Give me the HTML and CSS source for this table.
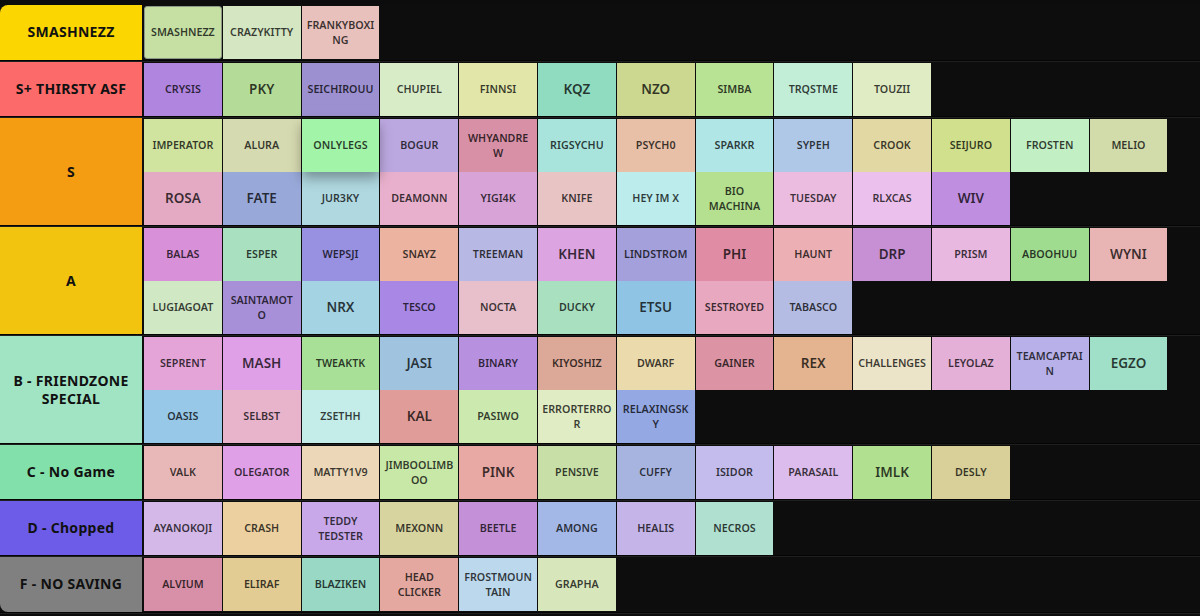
FILE: index.html
```html
<!DOCTYPE html>
<html lang="en">
<head>
<meta charset="utf-8">
<title>Tier List</title>
<link rel="stylesheet" href="styles.css">
</head>
<body>
<div class="board">
  <div class="tier">
    <div class="label first" style="background:#fcd600">SMASHNEZZ</div>
    <div class="tiles">
      <div class="tile selected" style="background:#c6e0a4">SMASHNEZZ</div>
      <div class="tile" style="background:#d4e6c2">CRAZYKITTY</div>
      <div class="tile" style="background:#e8c0bc">FRANKYBOXI<br>NG</div>
    </div>
  </div>
  <div class="tier">
    <div class="label" style="background:#fd6a6a">S+ THIRSTY ASF</div>
    <div class="tiles">
      <div class="tile" style="background:#b085e0">CRYSIS</div>
      <div class="tile big" style="background:#b4dc98">PKY</div>
      <div class="tile" style="background:#9c90d0">SEICHIROUU</div>
      <div class="tile" style="background:#d8ecc8">CHUPIEL</div>
      <div class="tile" style="background:#e2e6a8">FINNSI</div>
      <div class="tile big" style="background:#90dcc0">KQZ</div>
      <div class="tile big" style="background:#ccd890">NZO</div>
      <div class="tile" style="background:#b8e294">SIMBA</div>
      <div class="tile" style="background:#c2eed8">TRQSTME</div>
      <div class="tile" style="background:#e0ecc4">TOUZII</div>
    </div>
  </div>
  <div class="tier">
    <div class="label" style="background:#f49c12">S</div>
    <div class="tiles">
      <div class="tile" style="background:#d0e4a0">IMPERATOR</div>
      <div class="tile" style="background:#d6dab0">ALURA</div>
      <div class="tile lifted" style="background:#a2f4a8">ONLYLEGS</div>
      <div class="tile" style="background:#bca8e0">BOGUR</div>
      <div class="tile" style="background:#d890a6">WHYANDRE<br>W</div>
      <div class="tile" style="background:#a8e4dc">RIGSYCHU</div>
      <div class="tile" style="background:#e8c0a8">PSYCH0</div>
      <div class="tile" style="background:#b0e6e6">SPARKR</div>
      <div class="tile" style="background:#b0c8e8">SYPEH</div>
      <div class="tile" style="background:#e2d8a4">CROOK</div>
      <div class="tile" style="background:#d0e08c">SEIJURO</div>
      <div class="tile" style="background:#c2f0c4">FROSTEN</div>
      <div class="tile" style="background:#d2dcaa">MELIO</div>
      <div class="tile big" style="background:#e4aac4">ROSA</div>
      <div class="tile big" style="background:#98a8d8">FATE</div>
      <div class="tile" style="background:#b0d8e0">JUR3KY</div>
      <div class="tile" style="background:#e8b0cc">DEAMONN</div>
      <div class="tile" style="background:#d8a4d8">YIGI4K</div>
      <div class="tile" style="background:#e8c4c4">KNIFE</div>
      <div class="tile" style="background:#bcecec">HEY IM X</div>
      <div class="tile" style="background:#b4e090">BIO<br>MACHINA</div>
      <div class="tile" style="background:#ecbce0">TUESDAY</div>
      <div class="tile" style="background:#ecc0ec">RLXCAS</div>
      <div class="tile big" style="background:#c08ee0">WIV</div>
    </div>
  </div>
  <div class="tier">
    <div class="label" style="background:#f2c40f">A</div>
    <div class="tiles">
      <div class="tile" style="background:#d890d8">BALAS</div>
      <div class="tile" style="background:#a8e0c0">ESPER</div>
      <div class="tile" style="background:#9890e0">WEPSJI</div>
      <div class="tile" style="background:#ecb4a0">SNAYZ</div>
      <div class="tile" style="background:#b8b8e4">TREEMAN</div>
      <div class="tile big" style="background:#dca4e0">KHEN</div>
      <div class="tile" style="background:#a4a0dc">LINDSTROM</div>
      <div class="tile big" style="background:#e08ca4">PHI</div>
      <div class="tile" style="background:#ecb0b4">HAUNT</div>
      <div class="tile big" style="background:#c890d4">DRP</div>
      <div class="tile" style="background:#e8b8e0">PRISM</div>
      <div class="tile" style="background:#a0dc90">ABOOHUU</div>
      <div class="tile big" style="background:#e8b4b4">WYNI</div>
      <div class="tile" style="background:#d0e8c4">LUGIAGOAT</div>
      <div class="tile" style="background:#a890d8">SAINTAMOT<br>O</div>
      <div class="tile big" style="background:#a4d4e4">NRX</div>
      <div class="tile" style="background:#a888e4">TESCO</div>
      <div class="tile" style="background:#e8c0cc">NOCTA</div>
      <div class="tile" style="background:#a8e0c0">DUCKY</div>
      <div class="tile big" style="background:#90c4e4">ETSU</div>
      <div class="tile" style="background:#e8a8c0">SESTROYED</div>
      <div class="tile" style="background:#b4bce4">TABASCO</div>
    </div>
  </div>
  <div class="tier">
    <div class="label" style="background:#a0e4c4">B - FRIENDZONE SPECIAL</div>
    <div class="tiles">
      <div class="tile" style="background:#e4a4d8">SEPRENT</div>
      <div class="tile big" style="background:#e0a0e8">MASH</div>
      <div class="tile" style="background:#a8e098">TWEAKTK</div>
      <div class="tile big" style="background:#a0c4e0">JASI</div>
      <div class="tile" style="background:#b890e0">BINARY</div>
      <div class="tile" style="background:#dca898">KIYOSHIZ</div>
      <div class="tile" style="background:#eadaac">DWARF</div>
      <div class="tile" style="background:#dc94a4">GAINER</div>
      <div class="tile big" style="background:#e4b490">REX</div>
      <div class="tile" style="background:#ece4c8">CHALLENGES</div>
      <div class="tile" style="background:#e4b0d8">LEYOLAZ</div>
      <div class="tile" style="background:#b8b0e8">TEAMCAPTAI<br>N</div>
      <div class="tile big" style="background:#a0e0c8">EGZO</div>
      <div class="tile" style="background:#98c8e8">OASIS</div>
      <div class="tile" style="background:#e8b4cc">SELBST</div>
      <div class="tile" style="background:#c4ece8">ZSETHH</div>
      <div class="tile big" style="background:#e09c98">KAL</div>
      <div class="tile" style="background:#cceab0">PASIWO</div>
      <div class="tile" style="background:#e0ecc4">ERRORTERRO<br>R</div>
      <div class="tile" style="background:#94a8e4">RELAXINGSK<br>Y</div>
    </div>
  </div>
  <div class="tier">
    <div class="label" style="background:#82e0aa">C - No Game</div>
    <div class="tiles">
      <div class="tile" style="background:#e8b8b8">VALK</div>
      <div class="tile" style="background:#e0a0e8">OLEGATOR</div>
      <div class="tile" style="background:#ecd8b8">MATTY1V9</div>
      <div class="tile" style="background:#c8e8a8">JIMBOOLIMB<br>OO</div>
      <div class="tile big" style="background:#e8a8a4">PINK</div>
      <div class="tile" style="background:#c8e0a8">PENSIVE</div>
      <div class="tile" style="background:#a8b4e0">CUFFY</div>
      <div class="tile" style="background:#c4bcec">ISIDOR</div>
      <div class="tile" style="background:#dcbcec">PARASAIL</div>
      <div class="tile big" style="background:#b0e090">IMLK</div>
      <div class="tile" style="background:#d8d098">DESLY</div>
    </div>
  </div>
  <div class="tier">
    <div class="label" style="background:#6c5ce7">D - Chopped</div>
    <div class="tiles">
      <div class="tile" style="background:#d4b8e8">AYANOKOJI</div>
      <div class="tile" style="background:#ecd0a0">CRASH</div>
      <div class="tile" style="background:#c8a8e8">TEDDY<br>TEDSTER</div>
      <div class="tile" style="background:#d8d4a0">MEXONN</div>
      <div class="tile" style="background:#c490d8">BEETLE</div>
      <div class="tile" style="background:#a4b8e8">AMONG</div>
      <div class="tile" style="background:#c4b4e8">HEALIS</div>
      <div class="tile" style="background:#b0e0d0">NECROS</div>
    </div>
  </div>
  <div class="tier">
    <div class="label last" style="background:#808080">F - NO SAVING</div>
    <div class="tiles">
      <div class="tile" style="background:#d890a8">ALVIUM</div>
      <div class="tile" style="background:#e2cc94">ELIRAF</div>
      <div class="tile" style="background:#98d8c4">BLAZIKEN</div>
      <div class="tile" style="background:#e4a8a0">HEAD<br>CLICKER</div>
      <div class="tile" style="background:#bcd8ec">FROSTMOUN<br>TAIN</div>
      <div class="tile" style="background:#d8e6bc">GRAPHA</div>
    </div>
  </div>
</div>
</body>
</html>
```
FILE: styles.css
```css
html, body {
  margin: 0;
  padding: 0;
  background: #0c0c0c;
  height: 100%;
  overflow: hidden;
}

.board {
  padding-top: 5px;
  display: flex;
  flex-direction: column;
  gap: 2px;
  font-family: "Noto Sans", "Open Sans", sans-serif;
}

.tier {
  display: flex;
  min-height: 54.5px;
  background: #0d0d0d;
  box-shadow: 0 1px 0 #050505, 0 2px 0 #1f1f1f;
}

.tier:nth-child(6),
.tier:nth-child(7) {
  min-height: 53.5px;
}

.label {
  flex: 0 0 142px;
  display: flex;
  align-items: center;
  justify-content: center;
  text-align: center;
  padding: 0 12px;
  box-sizing: border-box;
  font-weight: 700;
  font-size: 14px;
  line-height: 18px;
  letter-spacing: 0.3px;
  color: #111;
}

.label.first { border-top-left-radius: 8px; }
.label.last { border-bottom-left-radius: 8px; }

.tiles {
  margin-left: 2px;
  padding-top: 1px;
  display: grid;
  grid-template-columns: repeat(13, 77.8px);
  grid-auto-rows: 53px;
  column-gap: 1px;
  align-content: start;
}

.tile {
  display: flex;
  align-items: center;
  justify-content: center;
  text-align: center;
  white-space: nowrap;
  font-size: 10.7px;
  font-weight: 600;
  line-height: 14.5px;
  color: rgba(0, 0, 0, 0.76);
  box-sizing: border-box;
  position: relative;
}

.tile.big {
  font-size: 13.5px;
}

.tile.selected {
  border: 1px solid #8e9a88;
  border-radius: 3px;
}

.tile.lifted {
  z-index: 2;
  box-shadow: 0 6px 12px rgba(0, 0, 0, 0.35);
}
```
